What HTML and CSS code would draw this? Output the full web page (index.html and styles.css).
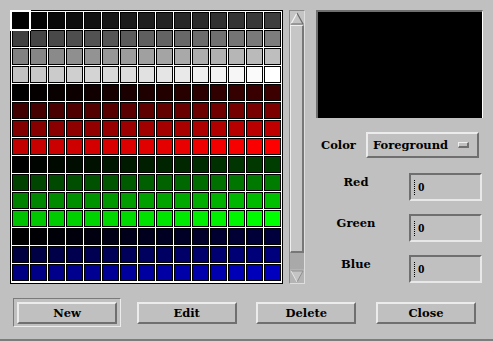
FILE: index.html
```html
<!doctype html>
<html lang="en">

<head>
    <meta charset="UTF-8" />
    <title>Color Editor</title>
    <link rel="stylesheet" href="styles.css">
</head>

<body>
    <div class="window">
        <div class="top">
            <!-- Palette -->
            <div id="swatches" class="swatches"></div>

            <!-- Palette scrollbar -->
            <div class="scrollbar">
                <div class="arrow">
                    <svg width="14" height="13" viewBox="0 0 14 13">
                        <polygon points="7,1 13,12 1,12" fill="#c4c4c4" />
                        <polyline points="1,12 7,1" stroke="#f4f4f4" stroke-width="1.2" fill="none" />
                        <polyline points="7,1 13,12 1,12" stroke="#6a6a6a" stroke-width="1.2" fill="none" />
                    </svg>
                </div>
                <div class="thumb"></div>
                <div class="arrow arrow-down">
                    <svg width="14" height="13" viewBox="0 0 14 13">
                        <polygon points="1,1 13,1 7,12" fill="#c4c4c4" />
                        <polyline points="1,1 13,1 7,12" stroke="#909090" stroke-width="1" fill="none" />
                        <polyline points="1,1 7,12" stroke="#e4e4e4" stroke-width="1" fill="none" />
                    </svg>
                </div>
            </div>

            <!-- Preview and values -->
            <div class="panel">
                <div class="preview"></div>

                <div class="color-row">
                    <span class="label">Color</span>
                    <div class="option">
                        Foreground
                        <span class="option-mark"></span>
                    </div>
                </div>

                <div class="field-row">
                    <span class="field-label">Red</span>
                    <div class="field"><span class="caret"></span>0</div>
                </div>

                <div class="field-row">
                    <span class="field-label">Green</span>
                    <div class="field"><span class="caret"></span>0</div>
                </div>

                <div class="field-row">
                    <span class="field-label">Blue</span>
                    <div class="field"><span class="caret"></span>0</div>
                </div>
            </div>
        </div>

        <!-- Actions -->
        <div class="actions">
            <button type="button" class="btn btn-default">New</button>
            <button type="button" class="btn">Edit</button>
            <button type="button" class="btn">Delete</button>
            <button type="button" class="btn">Close</button>
        </div>
    </div>

    <script src="./palette.js"></script>
</body>

</html>
```

FILE: styles.css
```css
body {
    margin: 0;
    background: #c0c0c0;
    font-family: 'DejaVu Serif', 'Liberation Serif', serif;
    font-weight: bold;
    font-size: 11.5px;
    color: #000;
}

.window {
    width: 493px;
    height: 341px;
    box-sizing: border-box;
    background: #c0c0c0;
    border-bottom: 2px solid #7c7c7c;
}

.top {
    display: flex;
    padding: 10px 0 0 10px;
}

/* Palette grid */
.swatches {
    display: grid;
    grid-template-columns: repeat(15, 17px);
    grid-auto-rows: 17px;
    gap: 1px;
    padding: 1px;
    background: #fff;
    border: 1px solid #000;
}

.swatch {
    border: 1px solid #000;
}

.swatch.selected {
    position: relative;
    z-index: 1;
    outline: 2px solid #fff;
}

/* Scrollbar */
.scrollbar {
    display: flex;
    flex-direction: column;
    width: 16px;
    height: 274px;
    box-sizing: border-box;
    margin-left: 6px;
    background: #a9a9a9;
    border-top: 1px solid #8a8a8a;
    border-left: 1px solid #8a8a8a;
    border-right: 1px solid #dedede;
    border-bottom: 1px solid #dedede;
}

.arrow {
    height: 14px;
    display: flex;
    justify-content: center;
    align-items: center;
    background: #c4c4c4;
}

.arrow-down {
    margin-top: auto;
    background: #b4b4b4;
}

.thumb {
    height: 225px;
    background: #c6c6c6;
    border-top: 1px solid #efefef;
    border-left: 1px solid #efefef;
    border-right: 2px solid #777;
    border-bottom: 2px solid #777;
}

/* Right panel */
.panel {
    display: flex;
    flex-direction: column;
    width: 167px;
    margin-left: 11px;
}

.preview {
    height: 108px;
    background: #000;
    border-top: 2px solid #6f6f6f;
    border-left: 2px solid #6f6f6f;
    border-right: 1px solid #fff;
    box-sizing: border-box;
}

.color-row {
    display: flex;
    align-items: center;
    margin-top: 14px;
}

.label {
    padding-left: 5px;
}

.option {
    display: flex;
    align-items: center;
    width: 113px;
    height: 26px;
    box-sizing: border-box;
    margin-left: auto;
    margin-right: 4px;
    padding: 0 8px 0 5px;
    background: #c0c0c0;
    border-top: 2px solid #ececec;
    border-left: 2px solid #ececec;
    border-right: 2px solid #6f6f6f;
    border-bottom: 2px solid #6f6f6f;
}

.option-mark {
    width: 11px;
    height: 6px;
    box-sizing: border-box;
    margin-left: auto;
    background: #c0c0c0;
    border-top: 1px solid #efefef;
    border-left: 1px solid #efefef;
    border-right: 2px solid #6f6f6f;
    border-bottom: 2px solid #6f6f6f;
}

.field-row {
    display: flex;
    align-items: flex-start;
    margin-top: 15px;
}

.field-row + .field-row {
    margin-top: 13px;
}

.field-label {
    width: 80px;
    text-align: center;
    padding-top: 2px;
}

.field {
    display: flex;
    align-items: center;
    width: 73px;
    height: 28px;
    box-sizing: border-box;
    margin-left: auto;
    margin-right: 1px;
    padding-left: 3px;
    font-family: 'Liberation Serif', serif;
    font-size: 13px;
    border-top: 2px solid #6f6f6f;
    border-left: 2px solid #6f6f6f;
    border-right: 2px solid #e8e8e8;
    border-bottom: 2px solid #e8e8e8;
}

.caret {
    width: 2px;
    height: 15px;
    margin-right: 1px;
    border-left: 1px dotted #000;
}

/* Bottom buttons */
.actions {
    display: flex;
    justify-content: space-between;
    padding: 0 17px;
    margin-top: 18px;
}

.btn {
    position: relative;
    width: 100px;
    height: 22px;
    padding: 0;
    background: #c0c0c0;
    font-family: 'DejaVu Serif', 'Liberation Serif', serif;
    font-weight: bold;
    font-size: 11.5px;
    color: #000;
    border-top: 2px solid #ececec;
    border-left: 2px solid #ececec;
    border-right: 2px solid #6f6f6f;
    border-bottom: 2px solid #6f6f6f;
}

.btn-default::before {
    content: "";
    position: absolute;
    top: -6px;
    left: -6px;
    right: -6px;
    bottom: -5px;
    border-top: 1px solid #7a7a7a;
    border-left: 1px solid #7a7a7a;
    border-right: 1px solid #ececec;
    border-bottom: 1px solid #ececec;
}
```

FILE: palette.js
```js
// Four ramps (gray, red, green, blue), 60 levels each, 15 per row
const grid = document.getElementById('swatches');
const ramps = [[1, 1, 1], [1, 0, 0], [0, 1, 0], [0, 0, 1]];

for (let row = 0; row < 15; row++) {
    const ramp = ramps[Math.floor(row / 4)];
    for (let col = 0; col < 15; col++) {
        const level = Math.round(((row % 4) * 15 + col) * 255 / 59);
        const cell = document.createElement('div');
        cell.className = 'swatch';
        if (row === 0 && col === 0) cell.classList.add('selected');
        cell.style.background = `rgb(${ramp[0] * level}, ${ramp[1] * level}, ${ramp[2] * level})`;
        grid.appendChild(cell);
    }
}
```
